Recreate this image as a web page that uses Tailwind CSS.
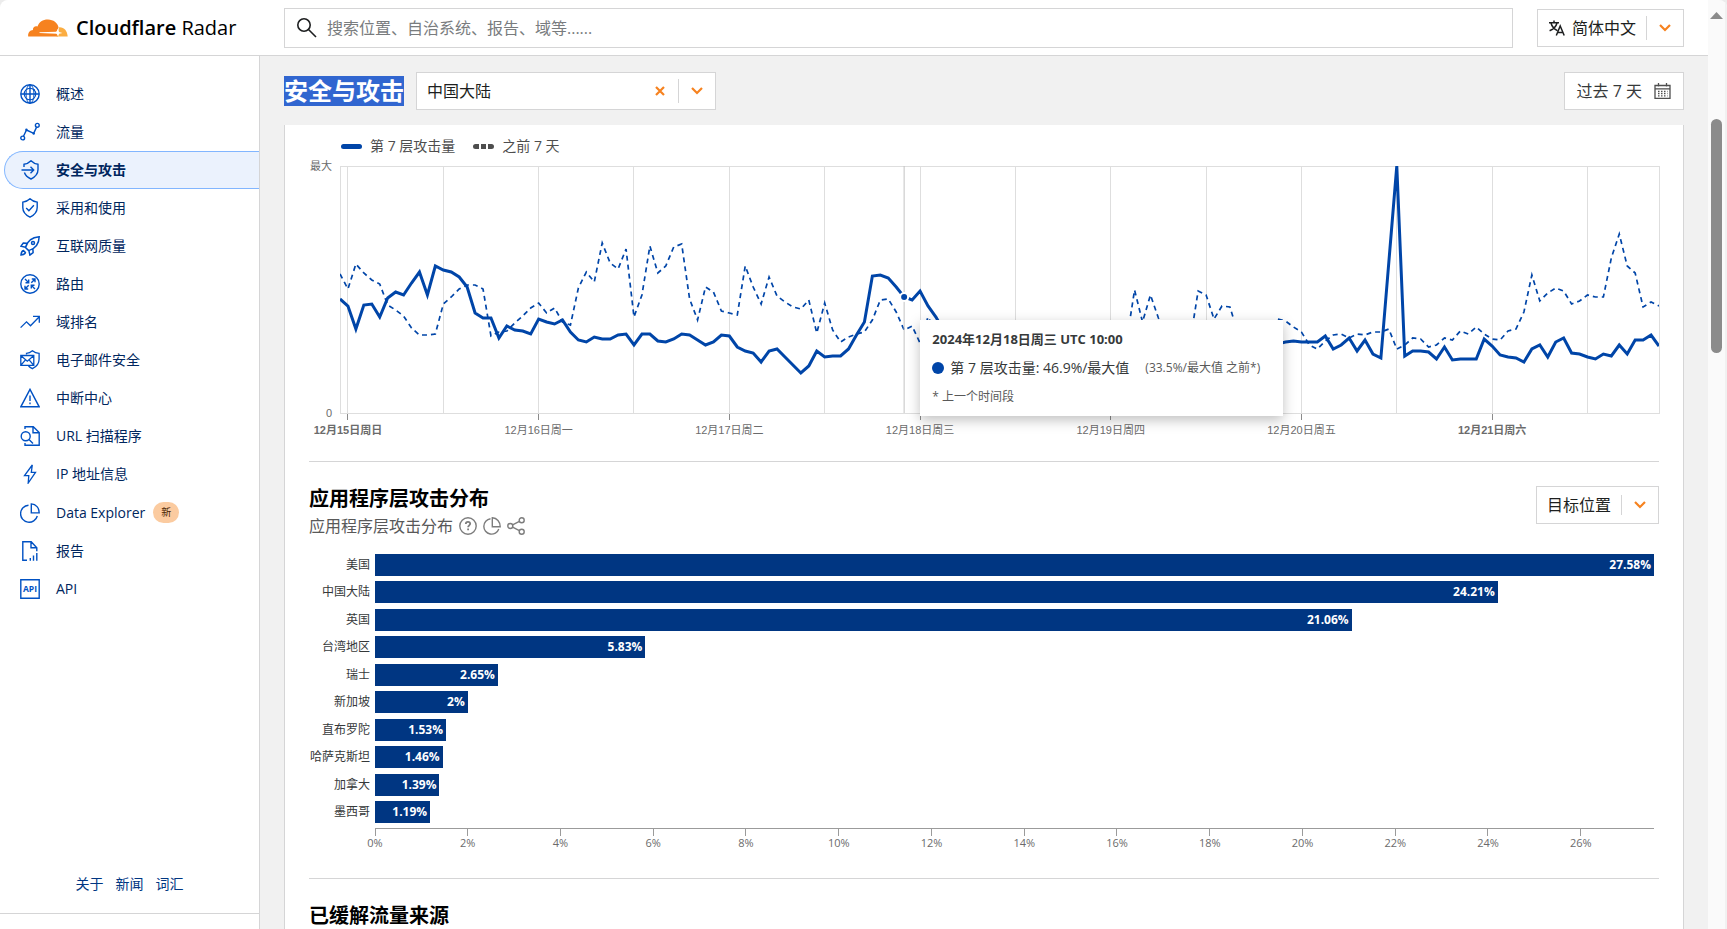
<!DOCTYPE html>
<html lang="zh-CN">
<head>
<meta charset="utf-8">
<meta name="viewport" content="width=device-width, initial-scale=1">
<title>安全与攻击 | Cloudflare Radar</title>
<script src="https://cdn.jsdelivr.net/npm/@tailwindcss/browser@4"></script>
</head>
<body class="bg-[#ececec] font-['Open_Sans','Noto_Sans_CJK_SC',sans-serif] text-sm text-[#36393a]">
<div class="flex h-screen overflow-hidden rounded-t-lg bg-[#f1f1f1]">
  <div class="flex min-w-0 flex-1 flex-col">

    <header class="flex h-14 shrink-0 items-center border-b border-[#d5d5d6] bg-white">
      <a href="#" class="flex w-[284px] shrink-0 items-center gap-2 pl-7 text-xl text-black">
        <svg class="h-[18px] w-10 shrink-0" viewBox="0 0 40 18" aria-hidden="true">
          <path fill="#f6821f" d="M.2 17.600C-.3 14.300 1.600 11.300 5 11c-.5-2.600 1.800-4.600 4.500-3.600C11 2.800 15 .3 20 .4c5.500.1 9.600 3.400 10.600 8L28 13.500l2 4.100z"/>
          <path fill="#fbad41" d="M31.200 8.200c4.500-.4 8.300 3.400 8.500 9.400H28.500l1-3.500-2-.8 2.300-1z"/>
          <path fill="#fff" d="M11.500 13.300l17-.5 1.700-3.300.8 3.500 3.500 1-3.400.8-1 2.400-1.400-2.500-17.200-.6z"/>
        </svg>
        <span class="whitespace-nowrap"><b class="font-semibold">Cloudflare</b> Radar</span>
      </a>
      <label class="flex h-10 min-w-0 flex-1 items-center gap-2 border border-[#d5d5d6] px-2.5">
        <svg class="size-6 shrink-0" viewBox="0 0 24 24" fill="none" stroke="#1d1f20" stroke-width="1.600" aria-hidden="true"><circle cx="9" cy="9" r="6.200"/><path d="M13.500 13.500l7.500 7.500"/></svg>
        <input type="search" aria-label="搜索" placeholder="搜索位置、自治系统、报告、域等......" class="min-w-0 flex-1 bg-transparent text-base outline-none placeholder:text-[#797c7e]">
      </label>
      <div class="mr-6 ml-6 flex h-[38px] w-[147px] shrink-0 items-center border border-[#d5d5d6] bg-white pl-[11px]">
        <svg class="mr-[7px] size-4 shrink-0" viewBox="0 0 16 16" fill="none" stroke="#1d1f20" stroke-width="1.500" aria-hidden="true"><path d="M0 2.700h10M5 .6v2M2 3c.8 3.200 3.200 5.900 6.300 7.600M8 3C7.200 6.200 4.300 9.200.6 10.800M7.300 15.500l3.900-9.500 4 9.500M8.600 12.400h5.200"/></svg>
        <select aria-label="语言" class="w-[66px] shrink-0 appearance-none bg-transparent text-base text-[#1d1f20] outline-none"><option>简体中文</option></select>
        <span class="ml-2 h-6 w-px bg-[#d5d5d6]"></span>
        <svg class="ml-3 h-2 w-3" viewBox="0 0 12 8" fill="none" stroke="#f6821f" stroke-width="2.200" aria-hidden="true"><path d="M1 1l5 5 5-5"/></svg>
      </div>
    </header>

    <div class="flex min-h-0 flex-1">
      <aside class="flex w-[260px] shrink-0 flex-col border-r border-[#d5d5d6] bg-white text-[#00265e]">
        <nav class="pt-[19px]">
          <ul>
            <li><a href="#" class="flex h-[38px] items-center gap-4 pl-5">
              <svg class="size-5" viewBox="0 0 20 20" fill="none" stroke="#0051c3" stroke-width="1.400"><circle cx="10" cy="10" r="9.200"/><circle cx="10" cy="10" r="5.800" stroke-width="1.100"/><ellipse cx="10" cy="10" rx="4" ry="9.200" stroke-width="1"/><path d="M10 1v18M1 10h18"/><circle cx="14" cy="6" r="1" fill="#0051c3" stroke="none"/></svg>概述</a></li>
            <li><a href="#" class="flex h-[38px] items-center gap-4 pl-5">
              <svg class="size-5" viewBox="0 0 20 20" fill="none" stroke="#0051c3" stroke-width="1.400"><circle cx="2.700" cy="16" r="1.900"/><circle cx="17.300" cy="3.300" r="1.900"/><path d="M3.500 14.200L6.500 8l7.200 3.400 2.900-6.300"/><circle cx="6.400" cy="7.800" r="1.200" fill="#0051c3" stroke="none"/><circle cx="13.700" cy="11.500" r="1.200" fill="#0051c3" stroke="none"/></svg>流量</a></li>
            <li><a href="#" aria-current="page" class="ml-1 flex h-[38px] items-center gap-4 rounded-l-full border border-r-0 border-[#82b6ff] bg-[#ebf2fd] pl-[15px] font-bold">
              <svg class="size-5" viewBox="0 0 20 20" fill="none" stroke="#0051c3" stroke-width="1.400"><path d="M4 7V4.300C7 4 9 2.800 11 .8c2 2 4 3.200 7 3.500v5.200c0 4.500-3 7.500-7 9.500-3.500-1.600-5.700-3.800-6.600-6.500M1.500 10h12M10.500 6.800l3.200 3.200-3.200 3.200"/></svg>安全与攻击</a></li>
            <li><a href="#" class="flex h-[38px] items-center gap-4 pl-5">
              <svg class="size-5" viewBox="0 0 20 20" fill="none" stroke="#0051c3" stroke-width="1.400"><path d="M10 .8c2 2 4.200 3 7.200 3.300v5.400c0 4.500-3.200 7.700-7.200 9.700-4-2-7.200-5.200-7.200-9.700V4.100C5.800 3.800 8 2.800 10 .8zM6.200 10l2.700 2.700 5-5.400"/></svg>采用和使用</a></li>
            <li><a href="#" class="flex h-[38px] items-center gap-4 pl-5">
              <svg class="size-5" viewBox="0 0 20 20" fill="none" stroke="#0051c3" stroke-width="1.500"><path d="M5.500 11.500c1.500-5.500 6-10.200 13.700-10.700C19 8.500 14.500 13 8.700 14.600zM7.200 7.200L3.300 7 .9 10.200l4.600 1M12.900 12.900l.2 3.800-3.200 2.400-1-4.500M3.500 14.500c-1.800.5-2.300 2.500-2.500 4.400 2-.1 4-.7 4.400-2.400z"/><circle cx="13" cy="7" r="1.500"/></svg>互联网质量</a></li>
            <li><a href="#" class="flex h-[38px] items-center gap-4 pl-5">
              <svg class="size-5" viewBox="0 0 20 20" fill="none" stroke="#0051c3" stroke-width="1.400"><circle cx="10" cy="10" r="9.200"/><path d="M5 5l3.500 3.500M5.500 8.700h3.200V5.500M15 15l-3.500-3.500M14.500 11.300h-3.200v3.200M11.300 8.700L15 5M11.800 5H15v3.200M8.700 11.300L5 15M8.200 15H5v-3.200"/></svg>路由</a></li>
            <li><a href="#" class="flex h-[38px] items-center gap-4 pl-5">
              <svg class="size-5" viewBox="0 0 20 20" fill="none" stroke="#0051c3" stroke-width="1.300"><path d="M.6 15.600l5.900-5.800 4 4L19 5M13 4.400h6.300v6.300"/></svg>域排名</a></li>
            <li><a href="#" class="flex h-[38px] items-center gap-4 pl-5">
              <svg class="size-5" viewBox="0 0 20 20" fill="none" stroke="#0051c3" stroke-width="1.300"><path d="M6.500 4.500V3.400c2.400-.2 4-1 5.900-2.600 2 1.600 4 2.400 6.700 2.600v5.800c0 4.500-2.600 7.500-6.700 9.500-1.500-.7-2.900-1.600-3.900-2.700"/><path d="M.8 5.500h13v9.800H.8zM1 5.700l6.300 5.500 6.300-5.500M1 15.200l4.500-5.400M13.600 15.200L9.100 9.800"/></svg>电子邮件安全</a></li>
            <li><a href="#" class="flex h-[38px] items-center gap-4 pl-5">
              <svg class="size-5" viewBox="0 0 20 20" fill="none" stroke="#0051c3" stroke-width="1.400"><path d="M10 1.300l9.200 17.500H.8zM10 7.500v5.500M10 14.500v1.700"/></svg>中断中心</a></li>
            <li><a href="#" class="flex h-[38px] items-center gap-4 pl-5">
              <svg class="size-5" viewBox="0 0 20 20" fill="none" stroke="#0051c3" stroke-width="1.400"><circle cx="5.700" cy="10.300" r="4.500"/><path d="M9 13.500l4 4M5 3V.8h8.300l5.900 5.700v12.700H5v-2.300M13 .8v6h6.200"/></svg>URL 扫描程序</a></li>
            <li><a href="#" class="flex h-[38px] items-center gap-4 pl-5">
              <svg class="size-5" viewBox="0 0 20 20" fill="none" stroke="#0051c3" stroke-width="1.300"><path d="M12.300 1L4.500 11.600h4.300L8.200 19l7.300-10.600h-4.200z"/></svg>IP 地址信息</a></li>
            <li><a href="#" class="flex h-[39px] items-center gap-4 pl-5">
              <svg class="size-5" viewBox="0 0 20 20" fill="none" stroke="#0051c3" stroke-width="1.400"><path d="M8.500 2.300A8.500 8.500 0 1 0 17.300 13M11.300.9v9h7.900c0-5-3.200-8.700-7.900-9z"/></svg><span class="flex items-center gap-2">Data Explorer<span class="flex h-[21px] w-[26px] items-center justify-center rounded-full bg-[#fbcba0] text-[10px] text-[#4a1f04]">新</span></span></a></li>
            <li><a href="#" class="flex h-[38px] items-center gap-4 pl-5">
              <svg class="size-5" viewBox="0 0 20 20" fill="none" stroke="#0051c3" stroke-width="1.400"><path d="M7 19.200H2.800V.8h8.400l5.600 5.900v3.500M11 .8v6h5.800M10.300 17v2.800M13.500 14.500v5.300M16.800 12v7.800"/></svg>报告</a></li>
            <li><a href="#" class="flex h-[38px] items-center gap-4 pl-5">
              <svg class="size-5" viewBox="0 0 20 20" fill="none" stroke="#0051c3" stroke-width="1.400"><path d="M.8.800h18.400v18.400H.8z"/><text x="10" y="13" text-anchor="middle" font-size="8.500" font-weight="700" fill="#0051c3" stroke="none">API</text></svg>API</a></li>
          </ul>
        </nav>
        <div class="mt-auto mb-[15px] flex h-11 justify-center gap-3 border-b border-[#d5d5d6] pt-1 leading-5 text-[#003682]">
          <a href="#">关于</a><a href="#">新闻</a><a href="#">词汇</a>
        </div>
      </aside>

      <main class="min-w-0 flex-1 overflow-hidden px-6 pt-4">
        <div class="flex h-[38px] items-center gap-3">
          <h1 class="bg-[#3166d0] text-2xl leading-[30px] font-bold text-white">安全与攻击</h1>
          <div class="flex h-[38px] w-[300px] items-center border border-[#d5d5d6] bg-white pl-2.5">
            <select aria-label="位置" class="min-w-0 flex-1 appearance-none bg-transparent text-base text-[#1d1f20] outline-none"><option>中国大陆</option></select>
            <button type="button" aria-label="清除" class="mr-[13px]"><svg class="h-2.5 w-2.5" viewBox="0 0 10 10" fill="none" stroke="#f6821f" stroke-width="2.200"><path d="M1 1l8 8M9 1L1 9"/></svg></button>
            <span class="h-6 w-px bg-[#d5d5d6]"></span>
            <svg class="mx-3 h-2 w-3" viewBox="0 0 12 8" fill="none" stroke="#f6821f" stroke-width="2.200" aria-hidden="true"><path d="M1 1l5 5 5-5"/></svg>
          </div>
          <button type="button" class="ml-auto flex h-[38px] items-center justify-between gap-3 border border-[#d5d5d6] bg-white px-3 text-base text-[#36393a]">过去 7 天
            <svg class="h-4 w-[17px]" viewBox="0 0 17 16" fill="none" stroke="#4e4e4e" stroke-width="1.300" aria-hidden="true"><path d="M1 2.500h15v12.800H1zM1 5.800h15M4.500 0v3.500M12.500 0v3.500"/><path stroke-dasharray="1.500 1.500" d="M4 8.500h9.500M4 10.700h9.500M4 12.900h9.500"/></svg>
          </button>
        </div>

        <div class="mt-[15px] border border-t-0 border-[#d5d5d6] bg-white px-6 pt-2.5 pb-10">
          <section>
            <div class="ml-8 flex h-[22px] items-center text-[#4e4e4e]">
              <span class="mr-2 h-[5px] w-[21px] rounded-full bg-[#0045a8]"></span>第 7 层攻击量
              <svg class="mr-2 ml-[18px] h-[5px] w-[21px]" viewBox="0 0 21 5" fill="#4e4e4e" aria-hidden="true"><path d="M2.500 0H6v5H2.500a2.500 2.500 0 0 1 0-5zM8 0h5v5H8zM15 0h3.500a2.500 2.500 0 0 1 0 5H15z"/></svg>之前 7 天
            </div>
            <div class="mt-[9px] mb-12 flex">
              <div class="-my-2 flex w-[31px] shrink-0 flex-col justify-between pr-2 text-right font-['Liberation_Sans','Noto_Sans_CJK_SC',sans-serif] text-[11px] leading-4 text-[#6b6b6b]"><span>最大</span><span>0</span></div>
              <div class="relative min-w-0 flex-1">
                <svg class="block h-[247px] w-full overflow-visible" role="img" aria-label="第 7 层攻击量">
                  <g id="grid" stroke="#dedede" shape-rendering="crispEdges"></g>
                  <rect width="100%" height="247" fill="none" stroke="#dedede" shape-rendering="crispEdges"/>
                  <svg width="100%" height="247" viewBox="0 0 166 247" preserveAspectRatio="none" class="overflow-hidden">
                    <polyline id="previous" fill="none" stroke="#0045a8" stroke-width="1.700" stroke-dasharray="5 4" vector-effect="non-scaling-stroke"/>
                    <polyline id="current" fill="none" stroke="#0045a8" stroke-width="3" vector-effect="non-scaling-stroke"/>
                  </svg>
                  <line x1="42.770%" x2="42.770%" y2="247" stroke="#c2c2c2"/>
                  <circle cx="42.770%" cy="131" r="4" fill="#0045a8" stroke="#fff" stroke-width="2"/>
                  <g class="font-['Liberation_Sans','Noto_Sans_CJK_SC',sans-serif] text-[11px]" fill="#6b6b6b" text-anchor="middle">
                    <text x="0.600%" y="268" font-weight="700">12月15日周日</text>
                    <text x="15.060%" y="268">12月16日周一</text>
                    <text x="29.520%" y="268">12月17日周二</text>
                    <text x="43.980%" y="268">12月18日周三</text>
                    <text x="58.430%" y="268">12月19日周四</text>
                    <text x="72.890%" y="268">12月20日周五</text>
                    <text x="87.350%" y="268" font-weight="700">12月21日周六</text>
                  </g>
                </svg>
                <div class="absolute top-[154px] left-[44%] flex h-24 w-[363px] flex-col justify-between bg-white px-3 py-[9px] whitespace-nowrap shadow-[0_4px_12px_rgba(0,0,0,0.25)]">
                  <p class="text-[13px] leading-5 font-bold">2024年12月18日周三 UTC 10:00</p>
                  <p class="flex items-center leading-5"><span class="mr-1.5 size-3 rounded-full bg-[#0045a8]"></span>第 7 层攻击量: 46.9%/最大值<span class="ml-4 text-xs text-[#595959]">(33.5%/最大值 之前*)</span></p>
                  <p class="text-xs leading-5 text-[#595959]">* 上一个时间段</p>
                </div>
              </div>
            </div>
          </section>

          <section class="border-t border-[#d5d5d6] pt-6">
            <div class="flex items-start justify-between">
              <div>
                <h2 class="text-xl leading-[26px] font-bold text-black">应用程序层攻击分布</h2>
                <div class="flex h-7 items-center gap-1.5 text-base text-[#595959]">应用程序层攻击分布
                  <button type="button" aria-label="帮助"><svg class="block size-[18px]" viewBox="0 0 18 18" fill="none" stroke="#7d7d7d" stroke-width="1.400"><circle cx="9" cy="9" r="8.200"/><path stroke-width="1.800" d="M6.800 7c0-1.500 1-2.200 2.200-2.200s2.200.8 2.200 2c0 1.500-2.100 1.600-2.100 3.500M9.100 11.500v1.800"/></svg></button>
                  <button type="button" aria-label="数据浏览"><svg class="block size-[18px]" viewBox="0 0 18 18" fill="none" stroke="#7d7d7d" stroke-width="1.400"><path d="M7.500 1.800A7.700 7.700 0 1 0 15.800 12M9.300.8v9h7.900c0-5-3.200-8.700-7.900-9z"/></svg></button>
                  <button type="button" aria-label="分享"><svg class="block size-[18px]" viewBox="0 0 18 18" fill="none" stroke="#7d7d7d" stroke-width="1.400"><circle cx="3.300" cy="9" r="2.500"/><circle cx="14.700" cy="3.300" r="2.500"/><circle cx="14.700" cy="14.700" r="2.500"/><path d="M5.600 7.900l6.800-3.500M5.600 10.100l6.800 3.500"/></svg></button>
                </div>
              </div>
              <div class="flex h-[38px] w-[123px] items-center border border-[#d5d5d6] bg-white pl-2.5">
                <select aria-label="分布依据" class="w-[66px] shrink-0 appearance-none bg-transparent text-base text-[#1d1f20] outline-none"><option>目标位置</option></select>
                <span class="ml-2 h-5 w-px bg-[#d5d5d6]"></span>
                <svg class="ml-3 h-2 w-3" viewBox="0 0 12 8" fill="none" stroke="#f6821f" stroke-width="2.200" aria-hidden="true"><path d="M1 1l5 5 5-5"/></svg>
              </div>
            </div>

            <ul class="mt-[11px] mr-[5px] grid h-[275px] grid-rows-10 text-xs">
              <li class="flex items-center gap-[5px]"><span class="w-[61px] shrink-0 text-right whitespace-nowrap">美国</span><div class="flex-1"><div class="flex h-[22px] items-center justify-end bg-[#003682] pr-[3px] text-xs font-bold text-white" style="width:100%">27.58%</div></div></li>
              <li class="flex items-center gap-[5px]"><span class="w-[61px] shrink-0 text-right whitespace-nowrap">中国大陆</span><div class="flex-1"><div class="flex h-[22px] items-center justify-end bg-[#003682] pr-[3px] text-xs font-bold text-white" style="width:87.78%">24.21%</div></div></li>
              <li class="flex items-center gap-[5px]"><span class="w-[61px] shrink-0 text-right whitespace-nowrap">英国</span><div class="flex-1"><div class="flex h-[22px] items-center justify-end bg-[#003682] pr-[3px] text-xs font-bold text-white" style="width:76.36%">21.06%</div></div></li>
              <li class="flex items-center gap-[5px]"><span class="w-[61px] shrink-0 text-right whitespace-nowrap">台湾地区</span><div class="flex-1"><div class="flex h-[22px] items-center justify-end bg-[#003682] pr-[3px] text-xs font-bold text-white" style="width:21.14%">5.83%</div></div></li>
              <li class="flex items-center gap-[5px]"><span class="w-[61px] shrink-0 text-right whitespace-nowrap">瑞士</span><div class="flex-1"><div class="flex h-[22px] items-center justify-end bg-[#003682] pr-[3px] text-xs font-bold text-white" style="width:9.61%">2.65%</div></div></li>
              <li class="flex items-center gap-[5px]"><span class="w-[61px] shrink-0 text-right whitespace-nowrap">新加坡</span><div class="flex-1"><div class="flex h-[22px] items-center justify-end bg-[#003682] pr-[3px] text-xs font-bold text-white" style="width:7.25%">2%</div></div></li>
              <li class="flex items-center gap-[5px]"><span class="w-[61px] shrink-0 text-right whitespace-nowrap">直布罗陀</span><div class="flex-1"><div class="flex h-[22px] items-center justify-end bg-[#003682] pr-[3px] text-xs font-bold text-white" style="width:5.55%">1.53%</div></div></li>
              <li class="flex items-center gap-[5px]"><span class="w-[61px] shrink-0 text-right whitespace-nowrap">哈萨克斯坦</span><div class="flex-1"><div class="flex h-[22px] items-center justify-end bg-[#003682] pr-[3px] text-xs font-bold text-white" style="width:5.29%">1.46%</div></div></li>
              <li class="flex items-center gap-[5px]"><span class="w-[61px] shrink-0 text-right whitespace-nowrap">加拿大</span><div class="flex-1"><div class="flex h-[22px] items-center justify-end bg-[#003682] pr-[3px] text-xs font-bold text-white" style="width:5.04%">1.39%</div></div></li>
              <li class="flex items-center gap-[5px]"><span class="w-[61px] shrink-0 text-right whitespace-nowrap">墨西哥</span><div class="flex-1"><div class="flex h-[22px] items-center justify-end bg-[#003682] pr-[3px] text-xs font-bold text-white" style="width:4.31%">1.19%</div></div></li>
            </ul>
            <div class="mt-0.5 mr-[5px] mb-[26px] ml-[66px]">
              <svg class="block h-6 w-full overflow-visible text-[11px]" aria-hidden="true">
                <line x2="100%" y1="0.500" y2="0.500" stroke="#9b9b9b" shape-rendering="crispEdges"/>
                <g id="percent-axis" fill="#6b6b6b" text-anchor="middle"></g>
              </svg>
            </div>
          </section>

          <section class="border-t border-[#d5d5d6] pt-6">
            <h2 class="text-xl leading-[26px] font-bold text-black">已缓解流量来源</h2>
          </section>
        </div>
      </main>
    </div>
  </div>

  <div class="flex w-[19px] shrink-0 flex-col items-center border-r-2 border-[#f1f1f1] bg-[#fafafa] pt-3" aria-hidden="true">
    <svg class="h-[7px] w-[13px]" viewBox="0 0 13 7" fill="#8b8b8b"><path d="M6.500 0L13 7H0z"/></svg>
    <div class="mt-[100px] h-[234px] w-[11px] rounded-full bg-[#8b8b8b]"></div>
  </div>
</div>

<script>
  // Hourly series: distance in pixels below the top of a 247px plot.
  const current = [133,140,163,139,138,151,132,126,129,117,106,129,100,104,106,111,121,147,152,152,172,160,164,165,168,153,156,158,154,166,174,176,171,173,173,169,168,
    179,168,168,175,176,173,168,169,174,179,176,169,170,181,185,187,196,185,183,191,199,207,200,185,191,190,190,183,169,156,110,109,112,121,131,134,125,140,151,
    165,...Array(42).fill(178),
    176,175,176,176,176,170,183,179,172,185,174,188,192,96,0,190,185,185,186,193,181,194,193,193,193,173,180,189,191,192,196,183,179,191,176,172,187,188,191,193,188,190,179,188,174,174,169,180];
  const previous = [108,123,98,107,114,118,139,144,150,162,169,169,168,138,131,123,119,119,123,170,166,165,157,150,142,137,147,142,156,159,122,106,116,77,97,103,83,
    151,129,80,107,100,81,78,133,154,121,126,145,147,149,100,121,138,111,130,136,141,143,134,167,137,164,176,171,168,166,154,134,133,146,164,160,177,151,165,
    ...Array(24).fill(175),
    124,156,129,152,170,175,175,175,125,129,153,140,141,167,175,175,175,175,
    153,155,161,166,179,183,175,169,168,172,168,169,166,166,163,183,179,172,173,181,179,172,174,165,168,161,168,173,174,165,163,146,109,135,127,122,125,138,135,129,131,131,92,68,100,107,141,136,140];
  const toPoints = (values) => values.map((y, x) => x + ',' + y).join(' ');
  document.getElementById('current').setAttribute('points', toPoints(current));
  document.getElementById('previous').setAttribute('points', toPoints(previous));

  const svg = (name, attributes, parent) => {
    const node = document.createElementNS('http://www.w3.org/2000/svg', name);
    for (const key in attributes) node.setAttribute(key, attributes[key]);
    parent.append(node);
    return node;
  };
  const grid = document.getElementById('grid');
  for (let hour = 1; hour < 166; hour += 12) {
    const x = (hour / 166 * 100) + '%';
    svg('line', { x1: x, x2: x, y1: 0, y2: 247 }, grid);
    if (hour % 24 === 1) svg('line', { x1: x, x2: x, y1: 247, y2: 254, stroke: '#8b8b8b' }, grid);
  }
  const axis = document.getElementById('percent-axis');
  for (let value = 0; value < 27; value += 2) {
    const x = (value / 27.58 * 100) + '%';
    svg('line', { x1: x, x2: x, y1: 0, y2: 8, stroke: '#9b9b9b', 'shape-rendering': 'crispEdges' }, axis);
    svg('text', { x, y: 19 }, axis).textContent = value + '%';
  }
</script>
</body>
</html>
